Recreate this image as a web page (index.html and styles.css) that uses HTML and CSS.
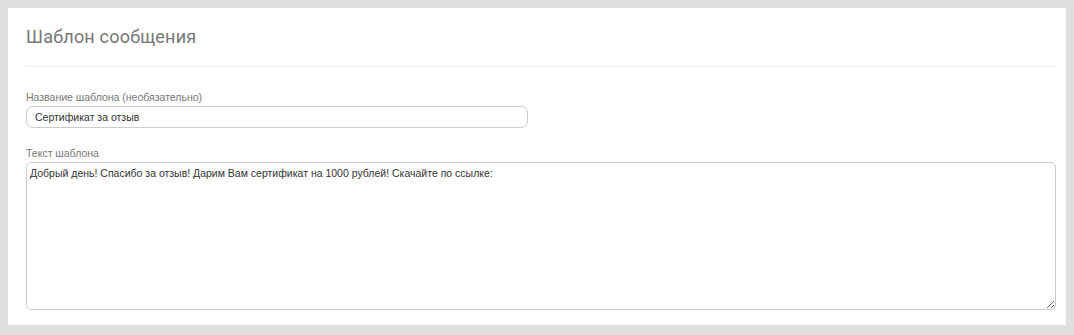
FILE: index.html
```html
<!DOCTYPE html>
<html lang="ru">
<head>
  <meta charset="UTF-8" />
  <title>Шаблон сообщения</title>
  <link rel="stylesheet" href="styles.css">
</head>
<body>

  <div class="card">
    <h2 class="card-title">Шаблон сообщения</h2>
    <hr class="divider">

    <!-- Название -->
    <div class="field">
      <label class="field-label" for="name">Название шаблона (необязательно)</label>
      <input class="field-input" id="name" type="text" value="Сертификат за отзыв">
    </div>

    <!-- Текст -->
    <div class="field">
      <label class="field-label" for="text">Текст шаблона</label>
      <textarea class="field-textarea" id="text">Добрый день! Спасибо за отзыв! Дарим Вам сертификат на 1000 рублей! Скачайте по ссылке:</textarea>
    </div>
  </div>

</body>
</html>
```

FILE: styles.css
```css
body {
  margin: 0;
  padding: 8px 8px 10px;
  background-color: #e0e0e0;
  font-family: "Liberation Sans", Arial, sans-serif;
}
.card {
  background-color: #fff;
  padding: 19px 10px 15px 18px;
}
.card-title {
  font-family: Roboto, "Liberation Sans", sans-serif;
  font-size: 18px;
  font-weight: 400;
  line-height: 20px;
  letter-spacing: 0.2px;
  color: #777;
  margin: 0;
}
.divider {
  border: none;
  border-top: 1px solid #eee;
  margin: 19px 0 23px;
}
.field {
  display: flex;
  flex-direction: column;
}
.field + .field {
  margin-top: 18px;
}
.field-label {
  font-size: 10.5px;
  line-height: 14px;
  color: #777;
  margin-bottom: 2px;
}
.field-input {
  box-sizing: border-box;
  width: 502px;
  height: 22px;
  padding: 0 8px;
  border: 1px solid #ccc;
  border-radius: 7px;
  font-family: "Liberation Sans", Arial, sans-serif;
  font-size: 10.5px;
  color: #333;
  outline: none;
}
.field-textarea {
  box-sizing: border-box;
  width: 100%;
  height: 148px;
  padding: 3px;
  border: 1px solid #ccc;
  border-radius: 5px;
  font-family: "Liberation Sans", Arial, sans-serif;
  font-size: 10.5px;
  line-height: 14px;
  color: #333;
  outline: none;
  margin: 0;
}
```
